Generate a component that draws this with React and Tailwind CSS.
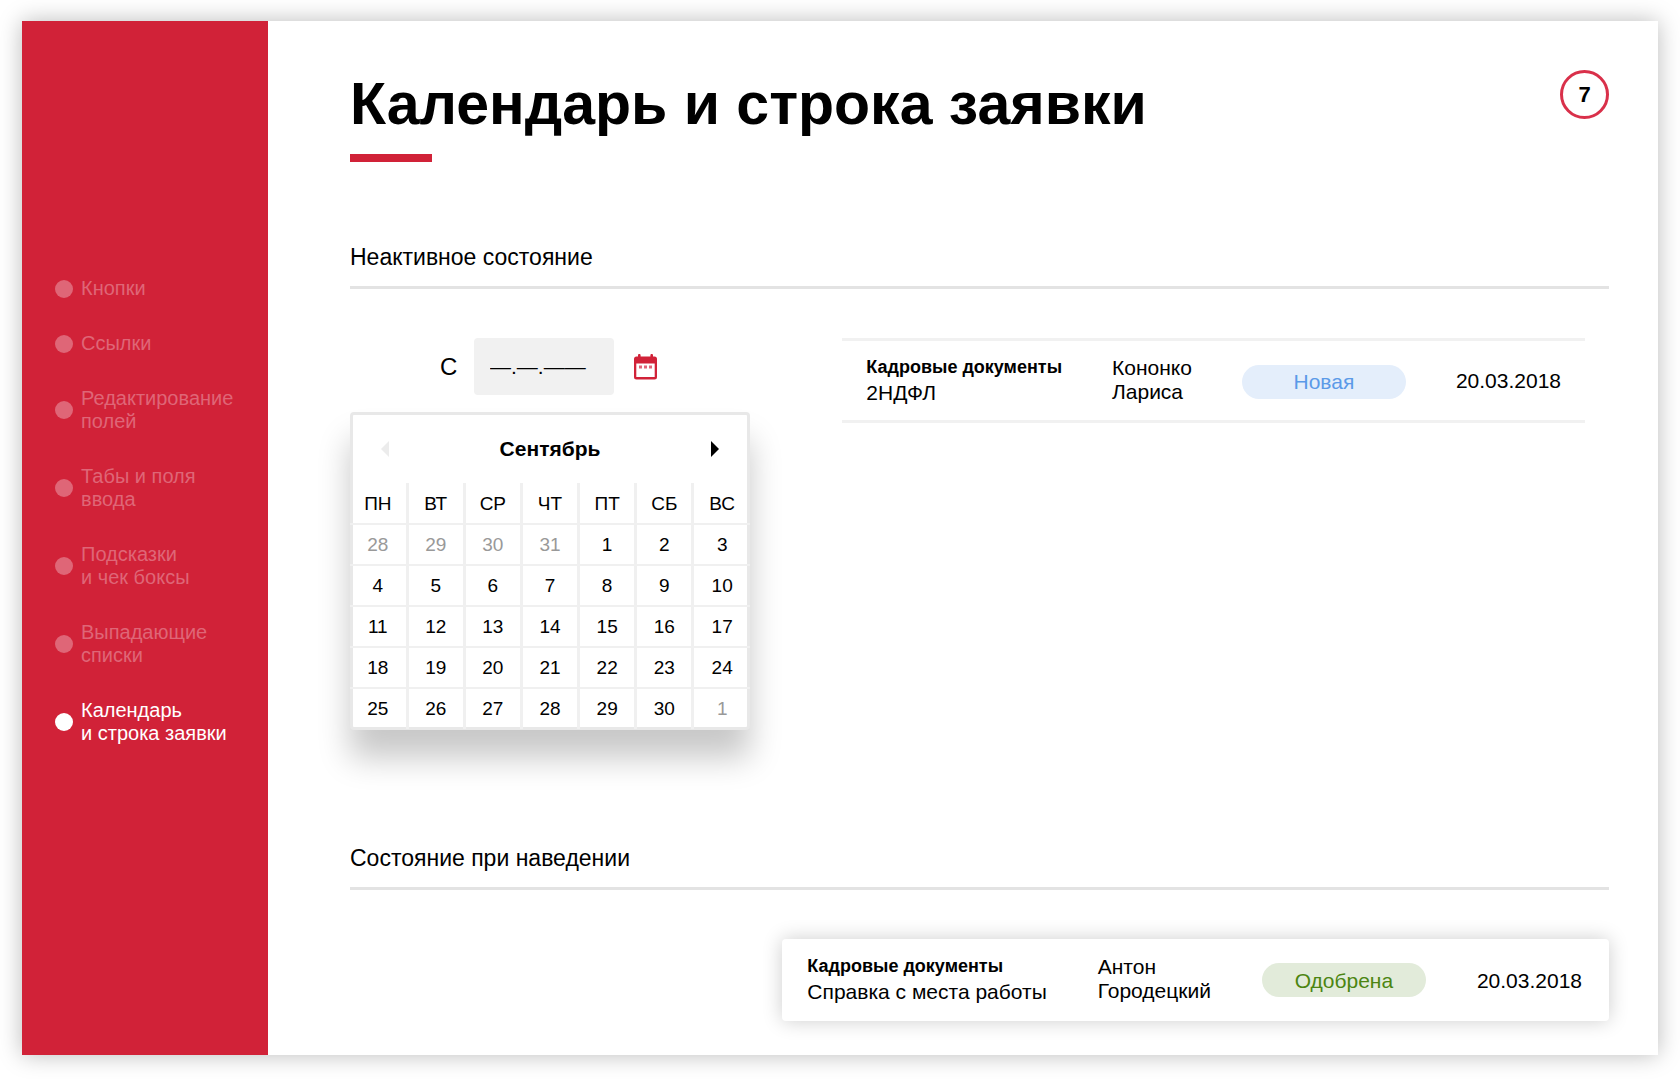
const navItems = [
  ['Кнопки'],
  ['Ссылки'],
  ['Редактирование', 'полей'],
  ['Табы и поля', 'ввода'],
  ['Подсказки', 'и чек боксы'],
  ['Выпадающие', 'списки'],
  ['Календарь', 'и строка заявки'],
];

const weekDays = ['ПН', 'ВТ', 'СР', 'ЧТ', 'ПТ', 'СБ', 'ВС'];

const weeks = [
  [-28, -29, -30, -31, 1, 2, 3],
  [4, 5, 6, 7, 8, 9, 10],
  [11, 12, 13, 14, 15, 16, 17],
  [18, 19, 20, 21, 22, 23, 24],
  [25, 26, 27, 28, 29, 30, -1],
];

function CalendarIcon() {
  return (
    <svg width="23" height="26" viewBox="0 0 23 26" aria-hidden="true">
      <path
        fill="#d12238"
        fillRule="evenodd"
        d="M4 1.200a1.300 1.300 0 0 1 2.600 0V2.500h9.800V1.200a1.300 1.300 0 0 1 2.600 0V2.500h1.500a2.500 2.500 0 0 1 2.500 2.500v18a2.500 2.500 0 0 1-2.500 2.500h-18A2.500 2.500 0 0 1 0 23V5a2.500 2.500 0 0 1 2.500-2.500H4zM2.300 9.500v13.500h18.400V9.500z"
      />
      <path fill="#e0667a" d="M5 11.500h3v3H5zM10 11.500h3v3h-3zM15 11.500h3v3h-3z" />
    </svg>
  );
}

function Sidebar() {
  return (
    <nav className="w-[246px] shrink-0 bg-[#d12238] pt-64 pl-[33px]">
      <ul className="flex flex-col gap-8">
        {navItems.map((lines, i) => (
          <li key={lines[0]}>
            <a
              href="#"
              className={
                i === navItems.length - 1
                  ? 'flex items-center gap-2 text-[20px] leading-[23px] text-white'
                  : 'flex items-center gap-2 text-[20px] leading-[23px] text-[#df6677]'
              }
            >
              <span className="size-[18px] shrink-0 rounded-full bg-current" />
              <span>
                {lines.map((line) => (
                  <span key={line} className="block whitespace-nowrap">
                    {line}
                  </span>
                ))}
              </span>
            </a>
          </li>
        ))}
      </ul>
    </nav>
  );
}

function SectionTitle({ children }) {
  return (
    <h2 className="border-b-[3px] border-[#e3e3e3] pb-[15px] text-[23px] leading-7">{children}</h2>
  );
}

function Calendar() {
  return (
    <div className="w-[400px] rounded border-[3px] border-[#e8e8e8] bg-white shadow-[0_28px_32px_rgba(0,0,0,0.22)]">
      <div className="flex h-[68px] items-center justify-between px-7">
        <button type="button" aria-label="Предыдущий месяц" disabled>
          <svg width="8" height="16" viewBox="0 0 8 16" fill="#ececec">
            <path d="M8 0v16L0 8z" />
          </svg>
        </button>
        <span className="text-[21px] leading-6 font-bold">Сентябрь</span>
        <button type="button" aria-label="Следующий месяц">
          <svg width="8" height="16" viewBox="0 0 8 16" fill="#000">
            <path d="M0 0v16l8-8z" />
          </svg>
        </button>
      </div>
      <table className="-mx-[3px] -mb-0.5 w-[400px] table-fixed border-collapse text-center text-[19px] leading-6">
        <thead>
          <tr>
            {weekDays.map((d) => (
              <th
                key={d}
                scope="col"
                className="h-[41px] border-l-[3px] border-[#f0f0f0] p-0 pt-0.5 font-normal first:border-l-0"
              >
                {d}
              </th>
            ))}
          </tr>
        </thead>
        <tbody>
          {weeks.map((week) => (
            <tr key={week[0]}>
              {week.map((day) => (
                <td
                  key={day}
                  className={
                    day < 0
                      ? 'h-[41px] border-t-2 border-l-[3px] border-[#f0f0f0] p-0 text-[#999999] first:border-l-0'
                      : 'h-[41px] border-t-2 border-l-[3px] border-[#f0f0f0] p-0 first:border-l-0'
                  }
                >
                  {Math.abs(day)}
                </td>
              ))}
            </tr>
          ))}
        </tbody>
      </table>
    </div>
  );
}

function RequestRow({ kind, title, first, last, badge, date, className }) {
  return (
    <div className={'flex items-center text-[21px] leading-[25px] whitespace-nowrap ' + className}>
      <div className="pb-0.5">
        <div className="text-[18px] font-bold">{kind}</div>
        <div>{title}</div>
      </div>
      <div className="pb-0.5 leading-6">
        <div>{first}</div>
        <div>{last}</div>
      </div>
      {badge}
      <div>{date}</div>
    </div>
  );
}

export default function App() {
  return (
    <div className="flex min-h-screen bg-white px-[22px] pt-[21px] pb-6 font-['Liberation_Sans',Arial,sans-serif] text-black">
      <div className="flex grow bg-white shadow-[0_0_22px_rgba(0,0,0,0.27)]">
        <Sidebar />
        <main className="grow pt-[49px] pr-[49px] pb-[34px] pl-[82px]">
          <header className="flex items-start justify-between">
            <div>
              <h1 className="text-[59px] leading-[68px] font-bold">Календарь и строка заявки</h1>
              <div className="mt-4 h-2 w-[82px] bg-[#d12238]" />
            </div>
            <div className="flex size-[49px] items-center justify-center rounded-full border-[3px] border-[#d9304a] text-[22px] font-bold">
              7
            </div>
          </header>

          <section className="mt-[81px]">
            <SectionTitle>Неактивное состояние</SectionTitle>
            <div className="mt-[49px] flex items-start justify-between">
              <div>
                <div className="flex items-center pl-[90px]">
                  <label htmlFor="date-from" className="w-[34px] text-[24px]">
                    С
                  </label>
                  <input
                    id="date-from"
                    type="text"
                    defaultValue="—.—.——"
                    className="h-[57px] w-[140px] rounded bg-[#f1f1f1] px-4 text-[21px]"
                  />
                  <button type="button" aria-label="Открыть календарь" className="ml-5">
                    <CalendarIcon />
                  </button>
                </div>
                <div className="mt-[17px]">
                  <Calendar />
                </div>
              </div>
              <RequestRow
                className="mr-6 h-[85px] gap-[50px] border-y-[3px] border-[#f1f1f1] px-6"
                kind="Кадровые документы"
                title="2НДФЛ"
                first="Кононко"
                last="Лариса"
                date="20.03.2018"
                badge={
                  <div className="mt-0.5 flex h-[34px] w-[164px] items-center justify-center rounded-full bg-[#e4eefb] text-[#5b9ae8]">
                    Новая
                  </div>
                }
              />
            </div>
          </section>

          <section className="mt-[114px]">
            <SectionTitle>Состояние при наведении</SectionTitle>
            <div className="mt-[49px] flex justify-end">
              <RequestRow
                className="h-[82px] gap-[51px] rounded pr-[27px] pl-[25px] shadow-[0_0_20px_rgba(0,0,0,0.2)]"
                kind="Кадровые документы"
                title="Справка с места работы"
                first="Антон"
                last="Городецкий"
                date="20.03.2018"
                badge={
                  <div className="flex h-[34px] w-[164px] items-center justify-center rounded-full bg-[#e2ebda] text-[#4c8512]">
                    Одобрена
                  </div>
                }
              />
            </div>
          </section>
        </main>
      </div>
    </div>
  );
}
